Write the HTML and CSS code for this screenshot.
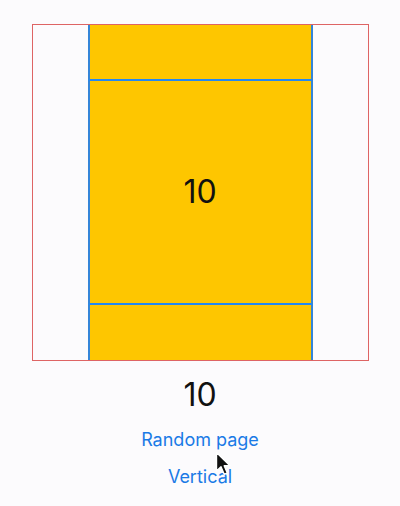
FILE: index.html
```html
<!DOCTYPE html>
<html>
<head>
<meta charset="utf-8">
<link rel="stylesheet" href="styles.css">
</head>
<body>
<div class="screen">
  <div class="frame">
    <div class="page"></div>
    <div class="page"><span class="page-num">10</span></div>
    <div class="page"></div>
  </div>
  <div class="counter">10</div>
  <a class="link">Random page</a>
  <a class="link">Vertical</a>
  <svg class="cursor" width="18" height="26" viewBox="0 0 18 26">
    <path d="M1.5 1.5 L1.5 20 L6 15.8 L9.2 23.3 L12.3 22 L9.2 14.8 L15 14.8 Z" fill="#111" stroke="#fff" stroke-width="1.4" stroke-linejoin="round"/>
  </svg>
</div>
</body>
</html>
```
FILE: styles.css
```css
html, body {
  margin: 0;
  padding: 0;
  background: #fcfbfd;
}
.screen {
  position: relative;
  width: 400px;
  height: 506px;
  display: flex;
  flex-direction: column;
  align-items: center;
  padding-top: 24px;
  box-sizing: border-box;
  font-family: Inter, "Liberation Sans", sans-serif;
}
.frame {
  width: 337px;
  height: 337px;
  box-sizing: border-box;
  border: 1.5px solid #de6464;
  overflow: hidden;
  display: flex;
  flex-direction: column;
  align-items: center;
  justify-content: center;
}
.page {
  flex: none;
  width: 225px;
  height: 224px;
  box-sizing: border-box;
  background: #fec600;
  border-left: 2px solid #3585d8;
  border-right: 2px solid #3585d8;
  border-bottom: 2px solid #2388f2;
  display: flex;
  align-items: center;
  justify-content: center;
}
.page-num {
  font-size: 32px;
  color: #111;
}
.counter {
  margin-top: 15px;
  font-size: 32px;
  line-height: 38px;
  color: #111;
}
.link {
  margin-top: 15px;
  font-size: 18px;
  line-height: 22px;
  color: #1a7ae6;
}
.link + .link {
  margin-top: 15px;
}
.cursor {
  position: absolute;
  left: 215px;
  top: 451px;
}
```
